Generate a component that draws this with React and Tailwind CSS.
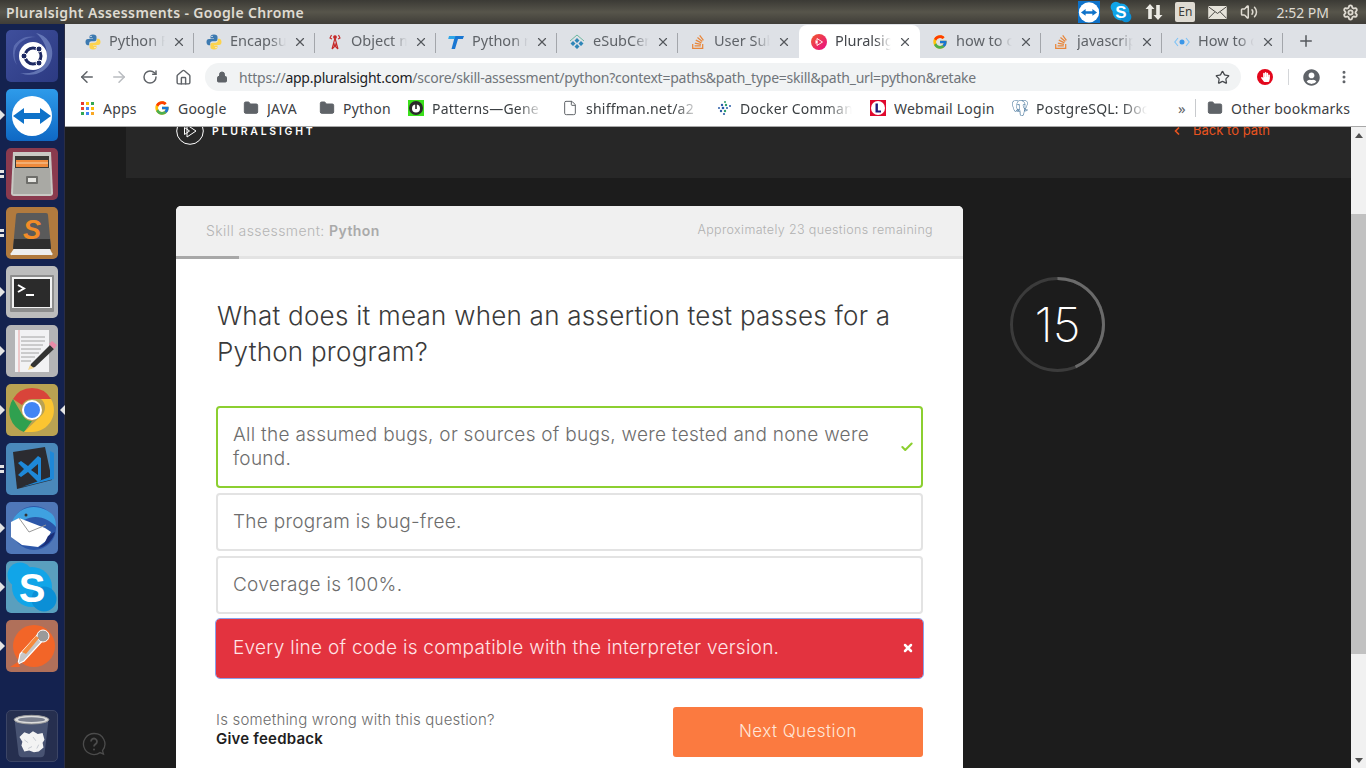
import React from "react";
import { ArrowLeft, ArrowRight, RotateCw, Home, Lock, Star, MoreVertical, Plus, X, File, Folder, ChevronLeft, Check, Volume2, Settings } from "lucide-react";
import { FaUserCircle, FaStackOverflow, FaHandPaper } from "react-icons/fa";
import { FcGoogle } from "react-icons/fc";
import { SiPostgresql } from "react-icons/si";

const UI = "font-['Noto_Sans','Open_Sans',sans-serif]";
const PS = "font-['Inter','Lato',sans-serif]";

function PythonIcon() {
  return (
    <svg viewBox="0 0 16 16" className="w-4 h-4">
      <path d="M8 0.5C5 0.5 4.5 1.6 4.5 3v1.5H8V5H3C1.4 5 .5 6.2.5 8s.9 3.2 2.3 3.2H4.200V9.500c0-1.300 1-2.200 2.300-2.200h3c1.200 0 2-.9 2-2V3C11.500 1.500 10.500.5 8 .5z" fill="#3d7ab0" />
      <path d="M8 15.500c3 0 3.500-1.100 3.500-2.500v-1.500H8V11h5c1.600 0 2.500-1.200 2.500-3S14.600 4.800 13.200 4.800h-1.400v1.700c0 1.300-1 2.200-2.300 2.200h-3c-1.200 0-2 .9-2 2V13c0 1.500 1 2.500 3.500 2.500z" fill="#fcd34d" />
      <circle cx="6" cy="2.400" r=".7" fill="#fff" />
      <circle cx="10" cy="13.600" r=".7" fill="#fff" />
    </svg>
  );
}
function TowerIcon() {
  return (
    <svg viewBox="0 0 16 16" className="w-4 h-4" fill="none" stroke="#c62828" strokeWidth="1.100">
      <path d="M8 4 5 15M8 4l3 11M6 10h4M5 15l5-5M11 15 6 10" />
      <circle cx="8" cy="3" r="1.300" fill="#c62828" />
      <path d="M4.500 1 3 4l2 1M11.500 1 13 4l-2 1" />
    </svg>
  );
}
function TIcon() {
  return (
    <svg viewBox="0 0 16 16" className="w-4 h-4">
      <path d="M3 2h13l-1.200 3H10L7 15H3.500L6.200 5H2z" fill="#1976d2" />
      <path d="M1 2h6.500L6.500 5H.2z" fill="#2ea6e8" />
    </svg>
  );
}
function ESubIcon() {
  return (
    <svg viewBox="0 0 16 16" className="w-4 h-4">
      <path d="M1 7 8 1l7 6" fill="none" stroke="#6cb8a0" strokeWidth="1" />
      <path d="M8 4l2.500 2.500L8 9 5.500 6.500zM4 7l2.500 2.500L4 12 1.500 9.500zM12 7l2.500 2.500L12 12 9.500 9.500zM8 10l2.500 2.500L8 15l-2.500-2.500z" fill="#2f86b8" />
    </svg>
  );
}
function PluralsightFav() {
  return (
    <svg viewBox="0 0 16 16" className="w-4 h-4">
      <defs>
        <linearGradient id="psf" x1="0" y1="0" x2="1" y2="1">
          <stop offset="0" stopColor="#f15b2a" />
          <stop offset="1" stopColor="#e80a89" />
        </linearGradient>
      </defs>
      <circle cx="8" cy="8" r="8" fill="url(#psf)" />
      <path d="M6 4.500v7L11.500 8z" fill="none" stroke="#fff" strokeWidth=".9" />
      <path d="M4.500 6v4L7 8z" fill="#fff" />
    </svg>
  );
}
function CodeFav() {
  return (
    <svg viewBox="0 0 16 16" className="w-4 h-4" fill="none" stroke="#7cc2f7" strokeWidth="1.100">
      <path d="M4 4 .8 8 4 12M12 4l3.200 4L12 12" />
      <circle cx="8" cy="8" r="2.500" fill="#3b97e8" stroke="none" />
    </svg>
  );
}
const SO = () => <FaStackOverflow className="w-4 h-4 text-[#e8863a]" />;
const G = () => <FcGoogle className="w-4 h-4" />;

function Tab({ icon, title, active, sep }) {
  return (
    <div className={`relative flex items-center w-[121px] h-full pl-3 ${active ? "bg-white rounded-t-lg" : ""}`}>
      <span className="w-4 h-4 mr-2 shrink-0">{icon}</span>
      <span className={`w-[56px] -mt-[2px] overflow-hidden whitespace-nowrap text-[14.500px] ${active ? "text-[#45484d]" : "text-[#5f6368]"} [mask-image:linear-gradient(to_right,black_72%,transparent)]`}>
        {title}
      </span>
      <X className="w-[14px] h-[14px] ml-[7px] text-[#55585d]" strokeWidth={2} />
      {sep && <span className="absolute right-0 top-[8px] h-[20px] w-px bg-[#a3a6ab]" />}
    </div>
  );
}

function Bookmark({ icon, children, className, textClass }) {
  return (
    <div className={`flex items-center shrink-0 ${className}`}>
      <span className="w-4 h-4 mr-2 shrink-0 flex items-center justify-center">{icon}</span>
      <span className={`whitespace-nowrap overflow-hidden text-[14px] tracking-[0.22px] text-[#3c4043] ${textClass || ""}`}>{children}</span>
    </div>
  );
}
const FADE = "[mask-image:linear-gradient(to_right,black_78%,transparent)]";
const FolderI = () => <Folder className="w-4 h-4 text-[#5f6368]" fill="#5f6368" strokeWidth={1.500} />;

function AppsIcon() {
  const c = ["#e53935", "#fbbc05", "#34a853", "#ea4335", "#4285f4", "#fbbc05", "#34a853", "#4285f4", "#f9a825"];
  return (
    <span className="grid grid-cols-3 gap-[2px] w-[13px]">
      {c.map((x, i) => (
        <svg key={i} viewBox="0 0 3 3" className="w-[3px] h-[3px]"><rect width="3" height="3" fill={x} /></svg>
      ))}
    </span>
  );
}
function PatternIcon() {
  return (
    <svg viewBox="0 0 16 16" className="w-4 h-4">
      <rect width="16" height="16" fill="#3be01c" />
      <circle cx="8" cy="8" r="7" fill="#2a2a2a" />
      <circle cx="8" cy="8.500" r="4" fill="#fff" />
      <rect x="7.200" y="3" width="1.600" height="6" fill="#2a2a2a" />
    </svg>
  );
}
function DockerIcon() {
  return (
    <svg viewBox="0 0 16 16" className="w-4 h-4" fill="#2a5ca8">
      <circle cx="9" cy="2" r="1" fill="#2e9e6b" /><circle cx="6" cy="5" r="1.200" /><circle cx="10" cy="5" r="1.200" fill="#2e9e6b" />
      <circle cx="3" cy="8" r="1" /><circle cx="7" cy="8" r="1.300" /><circle cx="11" cy="8" r="1" /><circle cx="14" cy="6" r="1" />
      <circle cx="5" cy="11" r="1.200" /><circle cx="9" cy="11" r="1.200" fill="#2e9e6b" /><circle cx="8" cy="14" r="1.100" />
    </svg>
  );
}
function WebmailIcon() {
  return (
    <svg viewBox="0 0 16 16" className="w-4 h-4">
      <rect width="16" height="16" fill="#e0082d" />
      <circle cx="8" cy="8" r="7" fill="#fff" />
      <path d="M5.500 3.500h2.400v7H11v2H5.500z" fill="#1f1a7a" />
    </svg>
  );
}

/* launcher */
function Tile({ bg, left, right, children }) {
  return (
    <div className="relative w-[52px] h-[52px] ml-[6px] shrink-0">
      <div className={`w-full h-full rounded-[5px] overflow-hidden flex items-center justify-center ${bg}`}>{children}</div>
      {left === 1 && <span className="absolute left-[-6px] top-[21px] w-0 h-0 border-y-[5px] border-y-transparent border-l-[5px] border-l-[#e4e4e4]" />}
      {left === 2 && (
        <span className="absolute left-[-6px] top-[22px] flex flex-col gap-[2px]">
          <span className="w-[4px] h-[3px] bg-[#e4e4e4]" />
          <span className="w-[4px] h-[3px] bg-[#e4e4e4]" />
        </span>
      )}
      {right && <span className="absolute right-[-7px] top-[21px] w-0 h-0 border-y-[5px] border-y-transparent border-r-[5px] border-r-[#e4e4e4]" />}
    </div>
  );
}
const UbuntuI = () => (
  <svg viewBox="0 0 52 52" className="w-[52px] h-[52px]">
    <path d="M30 3c14 3 20 18 14 30-5 9-16 15-30 10 16 2 26-6 27-18 0-8-4-16-11-22z" fill="#8b9ed6" opacity=".55" />
    <path d="M8 16c5-8 14-11 22-9-10 0-18 5-21 14-1 5 0 10 2 14-4-5-5-12-3-19z" fill="#8b9ed6" opacity=".4" />
    <circle cx="27" cy="26" r="14" fill="#fff" />
    <circle cx="27" cy="26" r="8" fill="none" stroke="#1e2a63" strokeWidth="3" />
    <circle cx="33" cy="19" r="3" fill="#1e2a63" stroke="#fff" /><circle cx="33" cy="33" r="3" fill="#1e2a63" stroke="#fff" /><circle cx="18" cy="26" r="3" fill="#1e2a63" stroke="#fff" />
  </svg>
);
const TeamV = ({ className, r = 20 }) => (
  <svg viewBox="0 0 52 52" className={className}>
    <circle cx="26" cy="27" r={r} fill="#fff" />
    <path d="M7 27l11-8v5h16v-5l11 8-11 8v-5H18v5z" fill="#0e72c9" />
  </svg>
);
const FilesI = () => (
  <svg viewBox="0 0 52 52" className="w-[52px] h-[52px]">
    <path d="M7 4h38l2 41a3 3 0 0 1-3 3H8a3 3 0 0 1-3-3z" fill="#c9c9c4" />
    <rect x="9" y="8" width="34" height="15" fill="#3a3a36" />
    <path d="M10 12h32v7H10z" fill="#ee8a3c" />
    <path d="M10 15h32" stroke="#f7d2a8" />
    <path d="M8 20h36l1 26H7z" fill="#a9a9a4" />
    <rect x="20" y="28" width="12" height="8" rx="1" fill="#6e6e6a" /><rect x="22" y="30" width="8" height="4" fill="#e6e6e2" />
  </svg>
);
const SublimeI = () => (
  <svg viewBox="0 0 52 52" className="w-[52px] h-[52px]">
    <path d="M9 40h34l3 6a1 1 0 0 1-1 2H6a1 1 0 0 1-1-2z" fill="#eee" />
    <path d="M10 8a2 2 0 0 1 2-2h28a2 2 0 0 1 2 2l3 33H7z" fill="#5a5a5a" />
    <path d="M8 32h36l1 10H7z" fill="#2f2f2f" />
    <text x="26" y="32" textAnchor="middle" fontSize="27" fontFamily="'Liberation Sans',sans-serif" fontWeight="700" fontStyle="italic" fill="#f28c28">S</text>
  </svg>
);
const TerminalI = () => (
  <svg viewBox="0 0 52 52" className="w-[52px] h-[52px]">
    <rect x="4" y="9" width="44" height="37" rx="1" fill="#8d8d8d" />
    <rect x="6" y="11" width="40" height="31" fill="#f2f2f2" />
    <rect x="8" y="13" width="36" height="28" fill="#2b2b2b" />
    <path d="M12 19l6 3.500-6 3.500" fill="none" stroke="#fff" strokeWidth="2" />
    <rect x="20" y="28" width="8" height="2" fill="#fff" />
  </svg>
);
const GeditI = () => (
  <svg viewBox="0 0 52 52" className="w-[52px] h-[52px]">
    <rect x="9" y="5" width="34" height="42" fill="#f2f2f4" />
    <path d="M13 5v42" stroke="#e8a0a0" />
    <path d="M15 12h24M15 16h24M15 20h22M15 24h20M15 28h18M15 32h14M15 36h10" stroke="#9a9a9a" strokeWidth=".9" />
    <path d="M25 39l19-19 4 4-19 18-6 2z" fill="#333" />
    <path d="M43 19l3-3 5 4-3 4z" fill="#e88aa8" />
    <path d="M24 40l-2 5 6-2z" fill="#f4d58a" />
  </svg>
);
const ChromeI = () => (
  <svg viewBox="0 0 52 52" className="w-[52px] h-[52px]">
    <path d="M26 4a22 22 0 0 1 19 11H26a11 11 0 0 0-10 6L7 15A22 22 0 0 1 26 4z" fill="#d9443a" />
    <path d="M7 15l10 17a11 11 0 0 0 9 5l-8 11A22 22 0 0 1 7 15z" fill="#2fa04f" />
    <path d="M45 15a22 22 0 0 1-19 33l-8 0 17-16a11 11 0 0 0 0-17z" fill="#fbc531" />
    <circle cx="26" cy="26" r="10" fill="#fff" /><circle cx="26" cy="26" r="8" fill="#4285f4" />
  </svg>
);
const VscodeI = () => (
  <svg viewBox="0 0 52 52" className="w-[52px] h-[52px]">
    <path d="M7 9l32-5 7 33-35 9z" fill="#2b2b30" />
    <path d="M40 6l8 4v26l-32 8 28-10V8z" fill="#1e88d8" />
    <path d="M32 13 22 23l-7-5-3 2 6 6-6 6 3 2 7-5 10 10 3-2V15zm0 8v11l-7-5z" fill="#1e88d8" />
  </svg>
);
const ThunderI = () => (
  <svg viewBox="0 0 52 52" className="w-[52px] h-[52px]">
    <circle cx="28" cy="26" r="22" fill="#2b56a8" />
    <path d="M6 20C12 4 32 0 46 12c3 3 4 8 4 13-6-8-20-14-32-7z" fill="#3fa1e0" />
    <circle cx="20" cy="13" r="1.500" fill="#333" />
    <path d="M5 20l8-4 26 10 6 4-5 9-8 6-16-2-11-8z" fill="#fff" />
    <path d="M13 16l10 14 17-7" fill="none" stroke="#999" />
    <path d="M32 46c8-1 15-8 17-16l-7 4-4 8z" fill="#1b2f78" />
  </svg>
);
const SkypeI = ({ className, sSize = 40, sy = 41 }) => (
  <svg viewBox="0 0 52 52" className={className}>
    <circle cx="26" cy="26" r="20" fill="#11a5e8" />
    <circle cx="14" cy="14" r="12.500" fill="#11a5e8" />
    <circle cx="38" cy="38" r="12.500" fill="#0b8fd6" />
    <text x="26" y={sy} textAnchor="middle" fontSize={sSize} fontFamily="'Liberation Sans',sans-serif" fontWeight="700" fill="#fff">S</text>
  </svg>
);
const PostmanI = () => (
  <svg viewBox="0 0 52 52" className="w-[52px] h-[52px]">
    <circle cx="28" cy="26" r="21" fill="#f26528" />
    <path d="M12 44l6-3 22-24-6-5-20 22z" fill="#c7c7c7" stroke="#fff" strokeWidth="1.200" />
    <circle cx="37" cy="16" r="6" fill="#9a9a9a" stroke="#fff" />
    <path d="M4 47l8-5 2 5z" fill="#f26528" />
    <path d="M16 32 30 16l3 2-13 16z" fill="#f58a3c" />
  </svg>
);
const TrashI = () => (
  <svg viewBox="0 0 52 52" className="w-[52px] h-[52px]">
    <path d="M8 11l4 34a4 4 0 0 0 4 3h19a4 4 0 0 0 4-3l4-34z" fill="#7e8aa8" opacity=".4" />
    <ellipse cx="25.500" cy="9" rx="18" ry="4.500" fill="#dcdcdc" stroke="#9a9a9a" />
    <ellipse cx="25.500" cy="9" rx="14" ry="2.500" fill="#7a7f8e" />
    <path d="M13 27l5-5 5 2 4-3 5 3 5-1 2 7-2 3 1 5-5 4-5 1-5-2-5 1-3-6 1-4z" fill="#f3f3f3" />
    <path d="M18 30l4 3M27 27l3 4M22 39l4-2M33 35l-2 4" stroke="#c4c8d0" />
  </svg>
);

function Launcher() {
  return (
    <div className="w-[65px] shrink-0 h-full bg-[#14224f] border-r border-r-[#2a2d45] flex flex-col gap-[7px] pt-[6px] pb-[6px]">
      <Tile bg="bg-gradient-to-br from-[#3f4f9c] to-[#2c3a82]"><UbuntuI /></Tile>
      <Tile left={1} bg="bg-gradient-to-b from-[#2e9bea] to-[#0f68c4]"><TeamV className="w-[52px] h-[52px]" /></Tile>
      <Tile left={2} bg="bg-[#8a3a4e]"><FilesI /></Tile>
      <Tile left={2} bg="bg-[#b17a3e]"><SublimeI /></Tile>
      <Tile left={1} bg="bg-[#bcbcbc]"><TerminalI /></Tile>
      <Tile left={1} bg="bg-[#b4b4b6]"><GeditI /></Tile>
      <Tile left={1} right bg="bg-[#b9a252]"><ChromeI /></Tile>
      <Tile left={2} bg="bg-[#4a88ba]"><VscodeI /></Tile>
      <Tile left={1} bg="bg-[#4f77b8]"><ThunderI /></Tile>
      <Tile left={1} bg="bg-[#5a9fbe]"><SkypeI className="w-[52px] h-[52px]" /></Tile>
      <Tile left={1} bg="bg-[#b0705a]"><PostmanI /></Tile>
      <div className="mt-auto w-[52px] h-[52px] ml-[6px] rounded-[5px] bg-[#262f4f] border border-[#3c4565] overflow-hidden flex items-center justify-center shrink-0"><TrashI /></div>
    </div>
  );
}

function TitleBar() {
  return (
    <div className={`h-6 shrink-0 flex items-center justify-between bg-gradient-to-b from-[#3b3a35] via-[#57554b] to-[#3f3d38] ${UI}`}>
      <span className="pl-[6px] text-[14px] font-semibold text-[#dfdbd2] tracking-[0.38px] whitespace-nowrap">Pluralsight Assessments - Google Chrome</span>
      <div className="flex items-center h-full">
        <span className="w-[22px] h-[22px] bg-[#0e72c9] flex items-center justify-center"><TeamV className="w-[22px] h-[22px]" r={24} /></span>
        <SkypeI className="w-[22px] h-[22px] ml-[10px]" />
        <svg viewBox="0 0 18 16" className="ml-[13px] w-[18px] h-[16px]" fill="#ecebe5">
          <path d="M5 0 9.500 5H6.800v10H3.200V5H.5zM13 16 8.500 11h2.700V1h3.600v10h2.700z" />
        </svg>
        <span className="ml-[12px] w-[20px] h-[20px] rounded-[2px] bg-[#dfdbd2] text-[#3c3b37] text-[12px] flex items-center justify-center">En</span>
        <svg viewBox="0 0 20 14" className="ml-[13px] w-[19px] h-[13px]">
          <rect width="20" height="14" rx="1" fill="#e6e3da" />
          <path d="M.5 1 10 8l9.500-7M.5 13 7 6.500M19.500 13 13 6.500" fill="none" stroke="#3c3b37" strokeWidth="1" />
        </svg>
        <Volume2 className="ml-[12px] w-[20px] h-[18px] text-[#dfdbd2]" />
        <span className="ml-[17px] text-[14px] text-[#dfdbd2] whitespace-nowrap">2:52 PM</span>
        <Settings className="ml-[13px] mr-[7px] w-[17px] h-[17px] text-[#dfdbd2]" strokeWidth={2.600} />
      </div>
    </div>
  );
}

function TabStrip() {
  return (
    <div className={`h-[34px] shrink-0 bg-[#dee1e6] flex pl-2 pt-px ${UI}`}>
      <Tab icon={<PythonIcon />} title="Python F" sep />
      <Tab icon={<PythonIcon />} title="Encapsu" sep />
      <Tab icon={<TowerIcon />} title="Object m" sep />
      <Tab icon={<TIcon />} title="Python m" sep />
      <Tab icon={<ESubIcon />} title="eSubCen" sep />
      <Tab icon={<SO />} title="User Sub" />
      <Tab icon={<PluralsightFav />} title="Pluralsig" active />
      <Tab icon={<G />} title="how to c" sep />
      <Tab icon={<SO />} title="javascrip" sep />
      <Tab icon={<CodeFav />} title="How to c" sep />
      <Plus className="ml-[14px] mt-[7px] w-[18px] h-[18px] text-[#55585d]" strokeWidth={2} />
    </div>
  );
}

function Toolbar() {
  return (
    <div className={`h-[34px] shrink-0 bg-white flex items-center pt-[4px] ${UI}`}>
      <ArrowLeft className="ml-[13px] w-[18px] h-[18px] text-[#5f6368]" strokeWidth={2} />
      <ArrowRight className="ml-[14px] w-[18px] h-[18px] text-[#b9bcc0]" strokeWidth={2} />
      <RotateCw className="ml-[14px] w-[16px] h-[16px] text-[#5f6368]" strokeWidth={2.200} />
      <Home className="ml-[17px] w-[17px] h-[17px] text-[#5f6368]" strokeWidth={2} />
      <div className="ml-[13px] w-[1036px] h-[28px] rounded-full bg-[#f1f3f4] flex items-center">
        <Lock className="ml-[11px] w-[12px] h-[12px] text-[#5f6368]" fill="#5f6368" />
        <span className="ml-[11px] text-[14px] whitespace-nowrap text-[#70757a] tracking-[-0.235px]">
          https://<span className="text-[#202124]">app.pluralsight.com</span>/score/skill-assessment/python?context=paths&amp;path_type=skill&amp;path_url=python&amp;retake
        </span>
        <Star className="ml-auto mr-[11px] w-[15px] h-[15px] text-[#45484c]" strokeWidth={2} />
      </div>
      <span className="ml-[16px] w-[16px] h-[16px] rounded-full bg-[#e3071c] flex items-center justify-center"><FaHandPaper className="w-[9px] h-[10px] text-white" /></span>
      <span className="ml-[15px] w-px h-[16px] bg-[#d4d6d9]" />
      <FaUserCircle className="ml-[14px] w-[17px] h-[17px] text-[#5f6368]" />
      <MoreVertical className="ml-[16px] w-[16px] h-[16px] text-[#5f6368]" strokeWidth={2.500} />
    </div>
  );
}

function Bookmarks() {
  return (
    <div className={`h-[35px] shrink-0 bg-white border-b border-b-[#a8a8a8] flex items-center pl-[14px] pb-[2px] ${UI}`}>
      <Bookmark className="w-[75px]" icon={<AppsIcon />}>Apps</Bookmark>
      <Bookmark className="w-[89px]" icon={<G />}>Google</Bookmark>
      <Bookmark className="w-[76px]" icon={<FolderI />}>JAVA</Bookmark>
      <Bookmark className="w-[89px]" icon={<FolderI />}>Python</Bookmark>
      <Bookmark className="w-[154px]" textClass={`w-[111px] ${FADE}`} icon={<PatternIcon />}>Patterns—Gene</Bookmark>
      <Bookmark className="w-[154px]" textClass={`w-[114px] ${FADE}`} icon={<File className="w-4 h-4 text-[#5f6368]" strokeWidth={1.500} />}>shiffman.net/a2</Bookmark>
      <Bookmark className="w-[154px]" textClass={`w-[112px] ${FADE}`} icon={<DockerIcon />}>Docker Comman</Bookmark>
      <Bookmark className="w-[142px]" icon={<WebmailIcon />}>Webmail Login</Bookmark>
      <Bookmark className="w-[166px]" textClass={`w-[111px] ${FADE}`} icon={<SiPostgresql className="w-4 h-4 text-[#336791]" />}>PostgreSQL: Doc</Bookmark>
      <span className="text-[15px] text-[#5f6368] w-[15px]">»</span>
      <span className="ml-[2px] w-px h-[18px] bg-[#c8cacd]" />
      <Bookmark className="ml-[11px]" icon={<FolderI />}>Other bookmarks</Bookmark>
    </div>
  );
}

function LogoMark() {
  return (
    <svg viewBox="0 0 28 28" className="w-7 h-7 shrink-0" fill="none" stroke="#fff" strokeWidth="1">
      <circle cx="14" cy="14" r="13.300" />
      <path d="M11 8v12l9-6z" />
      <path d="M8.500 10.500v7l5-3.500z" />
    </svg>
  );
}

function Option({ className, children, icon }) {
  return (
    <div className={`rounded-[4px] border-2 flex items-center justify-between pl-[15px] pr-[7px] text-[19px] leading-[24px] tracking-[0.27px] font-light ${className}`}>
      <span className="w-[650px]">{children}</span>
      {icon}
    </div>
  );
}

function Timer() {
  return (
    <div className="relative ml-[47px] mt-[71px] w-[95px] h-[95px] shrink-0 flex items-center justify-center">
      <svg viewBox="0 0 95 95" className="absolute inset-0 w-[95px] h-[95px]" fill="none">
        <circle cx="47.500" cy="47.500" r="46" stroke="#3b3b3b" strokeWidth="3" />
        <path d="M47.500 1.500A46 46 0 0 1 65.500 89.800" stroke="#6a6a6a" strokeWidth="3" />
      </svg>
      <span className={`text-[48px] font-extralight text-white leading-none ${PS}`}>15</span>
    </div>
  );
}

function Page() {
  return (
    <div className={`relative flex-1 min-h-0 bg-[#1c1c1c] flex overflow-hidden ${PS}`}>
      <div className="flex-1 min-w-0">
        <div className="ml-[61px] h-[51px] bg-[#272727] overflow-hidden pl-[50px] pr-[81px]">
          <div className="-mt-[10px] h-[28px] flex items-center justify-between">
            <div className="flex items-center">
              <LogoMark />
              <span className="ml-[8px] mt-px text-[10.500px] font-semibold tracking-[2.750px] text-white">PLURALSIGHT</span>
            </div>
            <div className="flex items-center text-[#e8541f] text-[13px] font-normal">
              <ChevronLeft className="w-[12px] h-[12px] mr-[10px]" strokeWidth={3.500} />
              Back to path
            </div>
          </div>
        </div>
        <div className="flex ml-[111px] mt-[28px]">
          <div className="w-[787px] shrink-0 bg-white rounded-t-[5px] overflow-hidden h-[600px]">
            <div className="h-[50px] bg-[#f0f0f0] flex items-center justify-between pl-[30px] pr-[30px] pb-[2px]">
              <span className="text-[14px] font-light text-[#b4b4b4] tracking-[0.43px]">Skill assessment: <span className="font-semibold text-[#aaaaaa]">Python</span></span>
              <span className="text-[12.500px] pt-px font-light text-[#b0b0b0] tracking-[0.36px]">Approximately 23 questions remaining</span>
            </div>
            <div className="h-[3px] bg-[#e3e3e3]"><div className="h-full w-[63px] bg-[#a8a8a8]" /></div>
            <div className="pl-[41px] pr-10 pt-[39px]">
              <h1 className="text-[26px] leading-[36px] font-light text-[#3a3a3a] tracking-[0.25px]">What does it mean when an assertion test passes for a Python program?</h1>
              <div className="-ml-px mt-[36px] flex flex-col gap-[5px]">
                <Option className="h-[82px] border-[#8ccf30] text-[#6d6d6d]" icon={<Check className="w-[14px] h-[14px] text-[#8ccf30]" strokeWidth={3.500} />}>
                  All the assumed bugs, or sources of bugs, were tested and none were found.
                </Option>
                <Option className="h-[58px] border-[#e3e3e3] text-[#6d6d6d]">The program is bug-free.</Option>
                <Option className="h-[58px] border-[#e3e3e3] text-[#6d6d6d]">Coverage is 100%.</Option>
                <Option className="h-[59px] pb-px bg-[#e3333f] border-[#e3333f] outline outline-1 outline-[#8aa0ea] text-[#ffe4e6]" icon={<X className="w-[12px] h-[12px] text-white" strokeWidth={5} />}>
                  Every line of code is compatible with the interpreter version.
                </Option>
              </div>
              <div className="-ml-px mt-[29px] flex items-center justify-between">
                <div className="mb-[7px] text-[15px] leading-[19px] font-light text-[#6d6d6d] tracking-[0.2px]">
                  <div>Is something wrong with this question?</div>
                  <div className="font-semibold text-[#1e1e1e]">Give feedback</div>
                </div>
                <div className="w-[250px] h-[50px] pb-px rounded-[3px] bg-[#fb7a40] text-[#ffe6d8] text-[17px] font-light tracking-[0.45px] flex items-center justify-center">Next Question</div>
              </div>
            </div>
          </div>
          <Timer />
        </div>
      </div>
      <div className="w-[15px] shrink-0 h-full bg-[#f1f1f1] flex flex-col items-center">
        <span className="mt-[6px] w-0 h-0 border-x-[4px] border-x-transparent border-b-[5px] border-b-[#505050]" />
        <div className="mt-[76px] w-full h-[440px] bg-[#c1c1c1]" />
        <span className="mt-auto mb-[5px] w-0 h-0 border-x-[4px] border-x-transparent border-t-[5px] border-t-[#505050]" />
      </div>
      <svg viewBox="0 0 24 24" className="absolute left-[17px] bottom-[12px] w-6 h-6" fill="none" stroke="#4c4c4c" strokeWidth="1.300">
        <path d="M12 1.500a10.500 10.500 0 1 0 6 19.100l3.500 1.500-1-3.500A10.500 10.500 0 0 0 12 1.500z" />
        <path d="M9 9.500a3 3 0 1 1 4.500 2.600c-1 .6-1.500 1.100-1.500 2.400" strokeWidth="1.800" />
        <circle cx="12" cy="17.500" r="1" fill="#4c4c4c" stroke="none" />
      </svg>
    </div>
  );
}

export default function App() {
  return (
    <div className="w-[1366px] h-[768px] overflow-hidden flex flex-col bg-[#1c1c1c]">
      <TitleBar />
      <div className="flex-1 min-h-0 flex">
        <Launcher />
        <div className="flex-1 min-w-0 flex flex-col">
          <TabStrip />
          <Toolbar />
          <Bookmarks />
          <Page />
        </div>
      </div>
    </div>
  );
}
